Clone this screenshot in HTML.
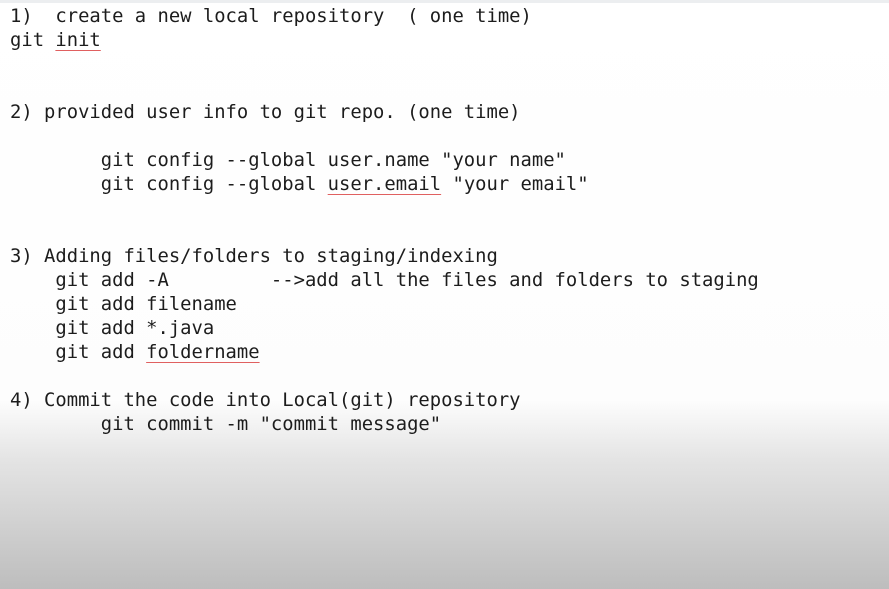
<!DOCTYPE html>
<html><head><style>
html,body{margin:0;padding:0;width:889px;height:589px;overflow:hidden}
body{background:linear-gradient(to bottom,#fff 0px,#fdfdfd 400px,#e4e4e4 460px,#bdbdbd 589px);position:relative}
.top{position:absolute;left:0;top:0;width:889px;height:3px;background:#eceef0}
pre{position:absolute;left:10px;top:5px;margin:0;font-family:"DejaVu Sans Mono",monospace;font-size:18.85px;line-height:24px;color:#1c1c1c}
u{text-decoration:underline #e06060;text-decoration-thickness:1px;text-underline-offset:4px}
</style></head><body><div class="top"></div>
<pre>1)  create a new local repository  ( one time)
git <u>init</u>


2) provided user info to git repo. (one time)

        git config --global user.name "your name"
        git config --global <u>user.email</u> "your email"


3) Adding files/folders to staging/indexing
    git add -A         -->add all the files and folders to staging
    git add filename
    git add *.java
    git add <u>foldername</u>

4) Commit the code into Local(git) repository
        git commit -m "commit message"</pre>
</body></html>
